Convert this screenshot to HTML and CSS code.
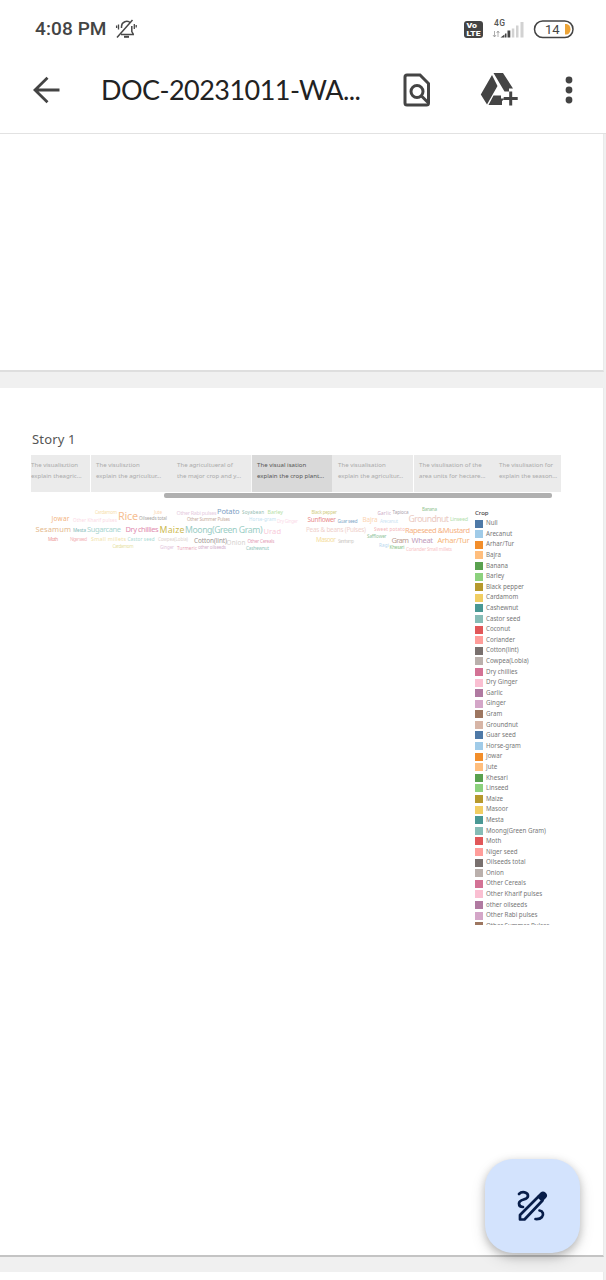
FILE: index.html
```html
<!DOCTYPE html>
<html lang="en">
<head>
<meta charset="utf-8">
<title>DOC-20231011-WA</title>
<link rel="stylesheet" href="styles.css">
</head>
<body>
<header class="top">
  <div class="status">
    <span class="clock">4:08 PM</span>
    <svg class="bell" width="22" height="22" viewBox="0 0 22 22" fill="none" stroke="#484848" stroke-width="1.5">
      <path d="M6 16.500h13M6.500 10V8.500a5.200 5.200 0 0 1 9-3.500M16.800 8v5.500l1.700 3M2 19.500 17.500 2"/><path d="M3.500 6.500v5M1.600 7.500v2.500M19.300 6v5M21.200 7v2.500" stroke-width="1.300"/><path d="M9 18.800h5" stroke-width="2"/>
    </svg>
    <svg class="signals" width="112" height="24" viewBox="462 17 112 24">
      <rect x="464" y="21" width="19" height="17" rx="3" fill="#444"/>
      <g class="volte"><text x="466.500" y="28.200" textLength="10.500" lengthAdjust="spacingAndGlyphs">Vo</text><text x="466.500" y="36.400" textLength="14" lengthAdjust="spacingAndGlyphs">LTE</text></g>
      <text class="net" x="494" y="25.500" textLength="11">4G</text>
      <path d="M494.500 31v6M493 35l1.500 2 1.500-2M498 37v-6M496.700 33l1.300-2 1.300 2" fill="none" stroke="#999" stroke-width=".8"/>
      <path d="M500.500 37.500l4-3v3z" fill="#444"/><path d="M505 33.500h1.500v4H505zM507.500 30.500h2.800v7h-2.800z" fill="#444"/>
      <path d="M511.800 28.500h2.500v9h-2.500zM516 25.500h2.500v12H516zM520.500 22h3v15.500h-3z" fill="#d2d2d2"/>
      <rect x="534.500" y="21" width="38.500" height="16.500" rx="8.200" fill="#fff" stroke="#444" stroke-width="1.500"/>
      <path d="M565 24h1.500a4 5.300 0 0 1 0 10.600H565z" fill="#eda436"/>
      <text class="pct" x="545" y="34" textLength="14.500">14</text>
    </svg>
  </div>
  <div class="bar">
    <svg class="back" width="28" height="28" viewBox="0 0 28 28" fill="none" stroke="#444" stroke-width="2.800"><path d="M27.500 14H3M15.500 1.700 3 14 15.500 26.300"/></svg>
    <h1 class="name">DOC-20231011-WA...</h1>
    <svg class="find" width="28" height="36" viewBox="0 0 28 36" fill="none" stroke="#444" stroke-width="3"><path d="M4 3h13l8.500 8.500V31a2 2 0 0 1-2 2H4a2 2 0 0 1-2-2V5a2 2 0 0 1 2-2z"/><circle cx="14" cy="19.500" r="6"/><path d="M18 23.500l7.500 7.500"/></svg>
    <svg class="drive" width="38" height="36" viewBox="0 0 38 36"><path d="M13.500 1h9.500l10 15.500h-4v3h-4.500zM12 3l5.500 11L7 32.500.800 22.500zM13.500 23.500h7.500v3h4L22 29v4H8.500z" fill="#444"/><path d="M30.700 19.500v14M23.700 26.500h14" stroke="#444" stroke-width="3"/></svg>
    <svg class="more" width="8" height="28" viewBox="0 0 8 28" fill="#444"><circle cx="4" cy="4" r="3.400"/><circle cx="4" cy="14" r="3.400"/><circle cx="4" cy="24" r="3.400"/></svg>
  </div>
</header>
<main class="viewer">
  <section class="page page-first"></section>
  <section class="page page-story">
    <h2 class="story">Story 1</h2>
    <nav class="points">
      <div class="point p1">The visualisztion<br>explain theagric...</div>
      <div class="point p2">The visulisztion<br>explain the agricultur...</div>
      <div class="point p3">The agricultueral of<br>the major crop and y...</div>
      <div class="point p4 active">The visual isation<br>explain the crop plant...</div>
      <div class="point p5">The visualisation<br>explain the agricultur...</div>
      <div class="point p6">The visulisation of the<br>area units for hectare...</div>
      <div class="point p7">The visulisation for<br>explain the season...</div>
    </nav>
    <div class="scroll"></div>
    <div class="dash">
      <svg class="cloud" width="444" height="56" viewBox="30 502 444 56">
        <g class="w4">
          <text x="95" y="514" textLength="22" fill="#f7dfae">Cardamom</text>
          <text x="154" y="514" textLength="8" fill="#fbd5ae">Jute</text>
          <text x="139" y="520" textLength="28" fill="#aaa5a2">Oilseeds total</text>
          <text x="73" y="521.500" textLength="44" fill="#fbd8e4">Other Kharif pulses</text>
          <text x="73" y="532" textLength="13" fill="#83bab7">Mesta</text>
          <text x="48" y="540.500" textLength="10" fill="#ec9698">Moth</text>
          <text x="70" y="540.500" textLength="17" fill="#f4b9bd">Niger seed</text>
          <text x="127.500" y="541" textLength="27" fill="#a9d8d1">Castor seed</text>
          <text x="158" y="540.500" textLength="30" fill="#ddd3cf">Cowpea(Lobia)</text>
          <text x="112.500" y="548" textLength="21" fill="#e6dfa4">Cardamom</text>
          <text x="160" y="548.500" textLength="14" fill="#e3c6dd">Ginger</text>
          <text x="242" y="513.500" textLength="22" fill="#94bbb1">Soyabean</text>
          <text x="187" y="521" textLength="43" fill="#c8ada2">Other Summer Pulses</text>
          <text x="249" y="521" textLength="27" fill="#c3dff1">Horse-gram</text>
          <text x="277" y="522.500" textLength="21" fill="#fbdce9">Dry Ginger</text>
          <text x="247.500" y="542.500" textLength="27" fill="#e4a0b9">Other Cereals</text>
          <text x="177" y="549.500" textLength="20" fill="#e9a3b5">Turmeric</text>
          <text x="198" y="549" textLength="28" fill="#d3b0cc">other oilseeds</text>
          <text x="246" y="550" textLength="23" fill="#8fc4bb">Cashewnut</text>
          <text x="311.500" y="514" textLength="25.500" fill="#d2cc83">Black pepper</text>
          <text x="337.500" y="522.500" textLength="20" fill="#83a7c8">Guar seed</text>
          <text x="380" y="522.500" textLength="18" fill="#cce4f3">Arecanut</text>
          <text x="377.500" y="515" textLength="13.500" fill="#ccaac5">Garlic</text>
          <text x="392.500" y="514" textLength="16" fill="#aaa1ac">Tapioca</text>
          <text x="422" y="510.500" textLength="15" fill="#92c592">Banana</text>
          <text x="374" y="531" textLength="31" fill="#f4b3b5">Sweet potato</text>
          <text x="338" y="542.500" textLength="16" fill="#d3d0cc">Sannhamp</text>
          <text x="367" y="538" textLength="19.500" fill="#91c49c">Safflower</text>
          <text x="379" y="547" textLength="10" fill="#b6d6ee">Ragi</text>
          <text x="389.500" y="549" textLength="15" fill="#89bf86">Khesari</text>
          <text x="406" y="550.500" textLength="46" fill="#f8c3c6">Coriander Small millets</text>
        </g>
        <g class="w5">
          <text x="91" y="541" textLength="35" fill="#f2dfa7">Small millets</text>
          <text x="176.500" y="515" textLength="40" fill="#e6cce0">Other Rabi pulses</text>
          <text x="267.500" y="513.500" textLength="15.500" fill="#b7dfa7">Barley</text>
          <text x="450" y="520.500" textLength="18" fill="#b3e0ad">Linseed</text>
        </g>
        <g class="w6">
          <text x="226.500" y="545" textLength="19" fill="#d4d1ce">Onion</text>
          <text x="51.500" y="521" textLength="18" fill="#f2b27b">Jowar</text>
          <text x="307.500" y="522" textLength="28.500" fill="#e98b8c">Sunflower</text>
          <text x="362.500" y="522" textLength="15" fill="#fcd4b1">Bajra</text>
          <text x="316" y="542" textLength="20" fill="#f5dda0">Masoor</text>
          <text x="194" y="542.500" textLength="33" fill="#9c9490">Cotton(lint)</text>
          <text x="306" y="531.500" textLength="60" fill="#efd1cc">Peas &amp; beans (Pulses)</text>
        </g>
        <g class="w7">
          <text x="217" y="513.500" textLength="22.500" fill="#7b9ec4">Potato</text>
          <text x="35.500" y="532" textLength="35.500" fill="#e4b98e">Sesamum</text>
          <text x="87" y="532" textLength="34" fill="#a9d5d0">Sugarcane</text>
          <text x="125.500" y="531.500" textLength="33" fill="#df8db0">Dry chillies</text>
          <text x="263.500" y="533.500" textLength="17.500" fill="#f8cad9">Urad</text>
          <text x="405" y="532.500" textLength="65" fill="#f5b183">Rapeseed &amp;Mustard</text>
          <text x="391.500" y="542.500" textLength="17.500" fill="#bd9b92">Gram</text>
          <text x="411.500" y="542.500" textLength="21.500" fill="#bf9bbb">Wheat</text>
          <text x="437.500" y="542.500" textLength="32" fill="#f5b478">Arhar/Tur</text>
        </g>
        <g class="w8">
          <text x="159.500" y="532.500" textLength="25" fill="#ccb951">Maize</text>
          <text x="185" y="532.500" textLength="77.500" fill="#9acdc5">Moong(Green Gram)</text>
          <text x="408.500" y="521.500" textLength="40.500" fill="#ebcac2">Groundnut</text>
        </g>
        <text class="w10" x="118" y="520" textLength="20" fill="#f6be92">Rice</text>
      </svg>
      <aside class="legend">
        <h3 class="legend-title">Crop</h3>
        <ul class="keys">
          <li class="c-blue">Null</li><li class="c-sky">Arecanut</li><li class="c-orange">Arhar/Tur</li><li class="c-peach">Bajra</li>
          <li class="c-green">Banana</li><li class="c-lime">Barley</li><li class="c-olive">Black pepper</li><li class="c-yellow">Cardamom</li>
          <li class="c-teal">Cashewnut</li><li class="c-aqua">Castor seed</li><li class="c-red">Coconut</li><li class="c-salmon">Coriander</li>
          <li class="c-gray">Cotton(lint)</li><li class="c-silver">Cowpea(Lobia)</li><li class="c-rose">Dry chillies</li><li class="c-pink">Dry Ginger</li>
          <li class="c-purple">Garlic</li><li class="c-lilac">Ginger</li><li class="c-brown">Gram</li><li class="c-tan">Groundnut</li>
          <li class="c-blue">Guar seed</li><li class="c-sky">Horse-gram</li><li class="c-orange">Jowar</li><li class="c-peach">Jute</li>
          <li class="c-green">Khesari</li><li class="c-lime">Linseed</li><li class="c-olive">Maize</li><li class="c-yellow">Masoor</li>
          <li class="c-teal">Mesta</li><li class="c-aqua">Moong(Green Gram)</li><li class="c-red">Moth</li><li class="c-salmon">Niger seed</li>
          <li class="c-gray">Oilseeds total</li><li class="c-silver">Onion</li><li class="c-rose">Other Cereals</li><li class="c-pink">Other Kharif pulses</li>
          <li class="c-purple">other oilseeds</li><li class="c-lilac">Other Rabi pulses</li><li class="c-brown">Other Summer Pulses</li>
        </ul>
      </aside>
    </div>
  </section>
  <section class="page page-next"></section>
</main>
<button class="fab" aria-label="Annotate">
  <svg width="36" height="36" viewBox="0 0 36 36" fill="none" stroke="#071d49" stroke-width="2.700" stroke-linecap="round" stroke-linejoin="round">
    <path d="M4 6C7 3 13 4 13 8 13 12.500 4 10.500 4 15.500c0 2 1.500 3.500 4 3.500M24.500 22.500c3.500.5 4.500 4 2.500 6.500-1.500 1.700-4 2.200-6.500 2"/>
    <path d="M5 31.500v-4.500L23.500 8.500l4 4L9.500 31.500z"/><path d="M24 8l2.500-2.500c2-2 5.500 1.500 3.500 3.500L27.500 11.500z" fill="#071d49"/>
  </svg>
</button>
</body>
</html>
```
FILE: styles.css
```css
* { box-sizing: border-box; }
body { margin: 0; width: 606px; height: 1280px; overflow: hidden; background: #f0f0f0; font-family: "Noto Sans", sans-serif; }
h1, h2, h3, ul { margin: 0; padding: 0; font-weight: 400; }
svg { display: block; flex: none; }

.top { height: 134px; background: #fff; border-bottom: 1px solid #e2e2e2; }
.status { display: flex; align-items: center; height: 58px; padding: 0 32px 0 35px; }
.clock { width: 72px; font: 500 19px/24px Roboto, sans-serif; letter-spacing: .1px; color: #444; white-space: nowrap; }
.bell { margin-left: 8px; }
.signals { margin-left: auto; }
.volte { font: 900 7px Roboto, sans-serif; fill: #fff; }
.net { font: 500 8.500px Roboto, sans-serif; fill: #555; }
.pct { font: 400 13px Roboto, sans-serif; fill: #444; }
.bar { display: flex; align-items: center; height: 63px; padding-left: 32px; }
.name { width: 264px; margin-left: 41px; font: 400 27px/36px Lato, sans-serif; letter-spacing: -.55px; color: #222; white-space: nowrap; }
.find { margin-left: 38px; }
.drive { margin-left: 49px; }
.more { margin-left: 47px; }

.page { width: 604px; background: #fff; border-right: 1px solid #eaeaea; }
.page-first { height: 238px; border-bottom: 2px solid #dedede; }
.page-story { height: 869px; margin-top: 16px; padding: 43px 0 0 31px; border-bottom: 2px solid #c4c4c4; }
.page-next { height: 10px; margin-top: 15px; }
.story { height: 24px; padding-left: 1px; font-size: 13px; line-height: 16px; letter-spacing: .15px; color: #555; }
.points { display: flex; width: 530px; height: 37px; }
.point { padding: 5px 0 0 5px; overflow: hidden; background: #ebebeb; color: #aaa; font-size: 6.100px; line-height: 10.500px; white-space: nowrap; }
.p1 { width: 60px; padding-left: 0; border-right: 1px solid #fff; }
.p2 { width: 80px; }
.p3 { width: 81px; padding-left: 6px; border-right: 1px solid #f8f8f8; }
.p4 { width: 80px; }
.p5 { width: 82px; padding-left: 6px; border-right: 1px solid #fff; }
.p6 { width: 80px; }
.p7 { flex: 1; }
.active { background: #d9d9d9; color: #555; }
.scroll { width: 388px; height: 5px; margin: 1px 0 0 133px; border-radius: 2px; background: #b0b0b0; }

.dash { display: flex; height: 423px; margin: 4px 0 0 -1px; overflow: hidden; }
.w4 { font-size: 4.600px; }
.w5 { font-size: 5.400px; }
.w6 { font-size: 6.400px; }
.w7 { font-size: 7.500px; }
.w8 { font-size: 8.700px; }
.w10 { font-size: 10.800px; }
.legend { padding: 7px 0 0 1px; }
.legend-title { height: 9.300px; font-size: 6px; line-height: 9px; color: #444; -webkit-text-stroke: .1px #444; }
.keys { list-style: none; }
.keys li { display: flex; align-items: center; gap: 3px; height: 10.600px; font-size: 6.200px; line-height: 10.600px; color: #777; white-space: nowrap; }
.keys li::before { content: ""; width: 8px; height: 8px; background: var(--key); }
.c-blue { --key: #4e79a7; } .c-sky { --key: #a0cbe8; }
.c-orange { --key: #f28e2b; } .c-peach { --key: #ffbe7d; }
.c-green { --key: #59a14f; } .c-lime { --key: #8cd17d; }
.c-olive { --key: #b6992d; } .c-yellow { --key: #f1ce63; }
.c-teal { --key: #499894; } .c-aqua { --key: #86bcb6; }
.c-red { --key: #e15759; } .c-salmon { --key: #ff9d9a; }
.c-gray { --key: #79706e; } .c-silver { --key: #bab0ac; }
.c-rose { --key: #d37295; } .c-pink { --key: #fabfd2; }
.c-purple { --key: #b07aa1; } .c-lilac { --key: #d4a6c8; }
.c-brown { --key: #9d7660; } .c-tan { --key: #d7b5a6; }

.fab { position: absolute; left: 485px; top: 1159px; width: 95px; height: 94px; padding: 0; border: 0; border-radius: 28px; background: #d3e3fd; box-shadow: 0 3px 8px rgba(0, 0, 0, .22), 0 6px 16px rgba(0, 0, 0, .12); display: grid; place-items: center; }
```
